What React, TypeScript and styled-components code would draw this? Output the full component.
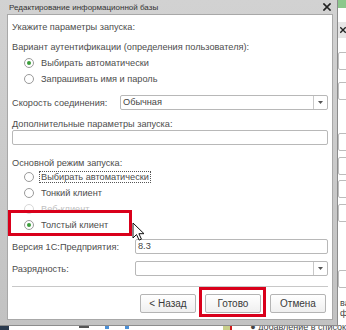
import styled, { createGlobalStyle } from "styled-components";

const GlobalStyle = createGlobalStyle`
  html, body {
    margin: 0;
    padding: 0;
    background: #ffffff;
  }
  body {
    font-family: "Liberation Sans", Arial, sans-serif;
  }
`;

type RadioProps = {
  label: string;
  checked?: boolean;
  disabled?: boolean;
  focused?: boolean;
};

function Radio({ label, checked, disabled, focused }: RadioProps) {
  return (
    <RadioRow>
      <RadioCircle $disabled={disabled}>{checked && <RadioDot />}</RadioCircle>
      <RadioLabel $disabled={disabled} $focused={focused}>
        {label}
      </RadioLabel>
    </RadioRow>
  );
}

function Select({ value }: { value?: string }) {
  return (
    <SelectBox>
      <SelectValue>{value}</SelectValue>
      <SelectArrow>
        <svg width="5" height="3" viewBox="0 0 5 3">
          <path d="M0 0h5L2.5 3z" fill="#555" />
        </svg>
      </SelectArrow>
    </SelectBox>
  );
}

function CloseIcon() {
  return (
    <svg width="8" height="8" viewBox="0 0 8 8">
      <path d="M1 1l6 6M7 1L1 7" stroke="#222" strokeWidth="1.7" strokeLinecap="square" />
    </svg>
  );
}

export default function App() {
  return (
    <>
      <GlobalStyle />
      <Desktop>
        <BackWindow>
          <BackGreen />
          <BackTitle>
            <CloseIcon />
          </BackTitle>
          <BackField $top={52} />
          <BackField $top={82} />
          <BackField $top={133} />
          <BackField $top={157} />
          <BackField $top={180} />
          <BackField $top={204} />
          <BackField $top={270} />
          <BackText $top={298}>ва</BackText>
          <BackText $top={308}>фо</BackText>
        </BackWindow>

        <BottomStrip>
          <NavyPatch />
          <StripIcons>
            <Dash />
            <BlueDot />
            <BlueDot />
          </StripIcons>
          <OliveBlock />
          <StripText>● добавление в список</StripText>
        </BottomStrip>

        <Dialog>
          <TitleBar>
            <TitleText>Редактирование информационной базы</TitleText>
            <CloseIcon />
          </TitleBar>
          <Body>
            <Heading>Укажите параметры запуска:</Heading>
            <GroupLabel>Вариант аутентификации (определения пользователя):</GroupLabel>
            <RadioList>
              <Radio label="Выбирать автоматически" checked />
              <Radio label="Запрашивать имя и пароль" />
            </RadioList>

            <FieldRow $mt={8} $labelWidth={108}>
              <FieldLabel>Скорость соединения:</FieldLabel>
              <Select value="Обычная" />
            </FieldRow>

            <GroupLabel $mt={8}>Дополнительные параметры запуска:</GroupLabel>
            <TextInput />

            <GroupLabel $mt={12}>Основной режим запуска:</GroupLabel>
            <RadioList $mt={0}>
              <Radio label="Выбирать автоматически" focused />
              <Radio label="Тонкий клиент" />
              <Radio label="Веб-клиент" disabled />
              <Radio label="Толстый клиент" checked />
            </RadioList>

            <FieldRow $mt={6} $labelWidth={123}>
              <FieldLabel>Версия 1С:Предприятия:</FieldLabel>
              <TextInput>8.3</TextInput>
            </FieldRow>

            <FieldRow $mt={7} $labelWidth={123}>
              <FieldLabel>Разрядность:</FieldLabel>
              <Select />
            </FieldRow>

            <Separator />

            <ButtonBar>
              <Button>&lt; Назад</Button>
              <Button>Готово</Button>
              <Button>Отмена</Button>
            </ButtonBar>
          </Body>
        </Dialog>

        <Highlight $left={8} $top={210} $width={124} $height={26} />
        <Highlight $left={199} $top={287} $width={67} $height={30} />

        <Cursor width="14" height="20" viewBox="0 0 14 20">
          <path
            d="M1 1v15l3.5-3.5 2.6 5.6 2.3-1-2.5-5.4H12z"
            fill="#fff"
            stroke="#111"
            strokeWidth="1"
            strokeLinejoin="round"
          />
        </Cursor>
      </Desktop>
    </>
  );
}

const Desktop = styled.div`
  position: relative;
  width: 346px;
  height: 330px;
  overflow: hidden;
  background: #ffffff;
  color: #4d4d4d;
  font-size: 9.2px;
`;

const BackWindow = styled.div`
  position: absolute;
  left: 336px;
  top: 0;
  width: 10px;
  height: 326px;
  background: #ffffff;
  overflow: hidden;
`;

const BackGreen = styled.div`
  height: 8px;
  background: #8cc78c;
`;

const BackTitle = styled.div`
  height: 16px;
  margin-top: 14px;
  background: #e6e6e6;
  display: flex;
  align-items: center;
  padding-left: 4px;
`;

const BackField = styled.div<{ $top: number }>`
  position: absolute;
  left: 2px;
  top: ${({ $top }) => $top}px;
  width: 30px;
  height: 16px;
  border: 1px solid #bcbcbc;
  border-radius: 2px;
  background: #fff;
`;

const BackText = styled.div<{ $top: number }>`
  position: absolute;
  left: 4px;
  top: ${({ $top }) => $top}px;
  font-size: 9px;
  color: #444;
  white-space: nowrap;
`;

const BottomStrip = styled.div`
  position: absolute;
  left: 0;
  right: 0;
  bottom: 0;
  height: 5px;
  display: flex;
  align-items: center;
  background: #ffffff;
  overflow: hidden;
`;

const NavyPatch = styled.div`
  width: 10px;
  height: 100%;
  background: #2b3b4f;
`;

const StripIcons = styled.div`
  display: flex;
  gap: 16px;
  margin-left: 70px;
  width: 158px;
`;

const Dash = styled.div`
  width: 10px;
  height: 2px;
  background: #555;
`;

const BlueDot = styled.div`
  width: 4px;
  height: 3px;
  background: #4a8fd6;
`;

const OliveBlock = styled.div`
  width: 8px;
  height: 100%;
  background: #c9cf8a;
  border-right: 2px solid #d21b1b;
`;

const StripText = styled.div`
  margin-left: 18px;
  font-size: 9px;
  color: #444;
  white-space: nowrap;
  line-height: 5px;
`;

const Dialog = styled.div`
  position: absolute;
  left: 0;
  top: 0;
  width: 338px;
  height: 326px;
  box-sizing: border-box;
  padding: 0 4px 5px 7px;
  display: flex;
  flex-direction: column;
  background: linear-gradient(#d2d2d2, #c2c2c2);
  border-right: 1px solid #8c8c8c;
  border-bottom: 1px solid #8c8c8c;
`;

const TitleBar = styled.div`
  height: 14px;
  display: flex;
  align-items: center;
  justify-content: space-between;
  padding: 0 2px 0 2px;
`;

const TitleText = styled.div`
  font-size: 8px;
  color: #333;
`;

const Body = styled.div`
  flex: 1;
  background: #ffffff;
  border: 1px solid #a8a8a8;
  padding: 0 4px;
  display: flex;
  flex-direction: column;
`;

const Heading = styled.div`
  margin-top: 6px;
  line-height: 12px;
  height: 12px;
`;

const GroupLabel = styled.div<{ $mt?: number }>`
  margin-top: ${({ $mt }) => $mt ?? 8}px;
  line-height: 12px;
  height: 12px;
`;

const RadioList = styled.div<{ $mt?: number }>`
  margin-top: ${({ $mt }) => $mt ?? 2}px;
  display: flex;
  flex-direction: column;
`;

const RadioRow = styled.div`
  height: 16px;
  display: flex;
  align-items: center;
  padding-left: 12px;
`;

const RadioCircle = styled.div<{ $disabled?: boolean }>`
  width: 10px;
  height: 10px;
  box-sizing: border-box;
  border-radius: 50%;
  border: 1px solid ${({ $disabled }) => ($disabled ? "#d8d8d8" : "#9a9a9a")};
  background: #fff;
  display: flex;
  align-items: center;
  justify-content: center;
  flex-shrink: 0;
`;

const RadioDot = styled.div`
  width: 4px;
  height: 4px;
  border-radius: 50%;
  background: #3a9e3a;
`;

const RadioLabel = styled.span<{ $disabled?: boolean; $focused?: boolean }>`
  margin-left: 5px;
  padding: 0 1px;
  line-height: 10px;
  color: ${({ $disabled }) => ($disabled ? "#c0c0c0" : "#4d4d4d")};
  border: 1px dotted ${({ $focused }) => ($focused ? "#555" : "transparent")};
`;

const FieldRow = styled.div<{ $mt: number; $labelWidth: number }>`
  margin-top: ${({ $mt }) => $mt}px;
  display: grid;
  grid-template-columns: ${({ $labelWidth }) => $labelWidth}px 1fr;
  align-items: center;
`;

const FieldLabel = styled.div`
  line-height: 12px;
`;

const SelectBox = styled.div`
  height: 15px;
  box-sizing: border-box;
  border: 1px solid #b8b8b8;
  border-radius: 2px;
  display: flex;
  align-items: stretch;
  background: #fff;
`;

const SelectValue = styled.div`
  flex: 1;
  padding-left: 2px;
  line-height: 13px;
  color: #444;
`;

const SelectArrow = styled.div`
  width: 13px;
  border-left: 1px solid #c8c8c8;
  display: flex;
  align-items: center;
  justify-content: center;
`;

const TextInput = styled.div`
  height: 15px;
  box-sizing: border-box;
  border: 1px solid #b8b8b8;
  border-radius: 2px;
  background: #fff;
  padding-left: 2px;
  line-height: 13px;
  color: #444;
`;

const Separator = styled.div`
  margin-top: 10px;
  height: 1px;
  background: #c8c8c8;
`;

const ButtonBar = styled.div`
  margin-top: 7px;
  display: flex;
  justify-content: flex-end;
  gap: 9px;
  padding-right: 2px;
`;

const Button = styled.div`
  width: 56px;
  height: 19px;
  box-sizing: border-box;
  border: 1px solid #b4b4b4;
  border-radius: 2px;
  background: linear-gradient(#ffffff, #efefef);
  display: flex;
  align-items: center;
  justify-content: center;
  font-size: 10px;
  color: #3a3a3a;
`;

const Highlight = styled.div<{ $left: number; $top: number; $width: number; $height: number }>`
  position: absolute;
  left: ${({ $left }) => $left}px;
  top: ${({ $top }) => $top}px;
  width: ${({ $width }) => $width}px;
  height: ${({ $height }) => $height}px;
  box-sizing: border-box;
  border: 3px solid #d9001b;
`;

const Cursor = styled.svg`
  position: absolute;
  left: 132px;
  top: 222px;
`;
